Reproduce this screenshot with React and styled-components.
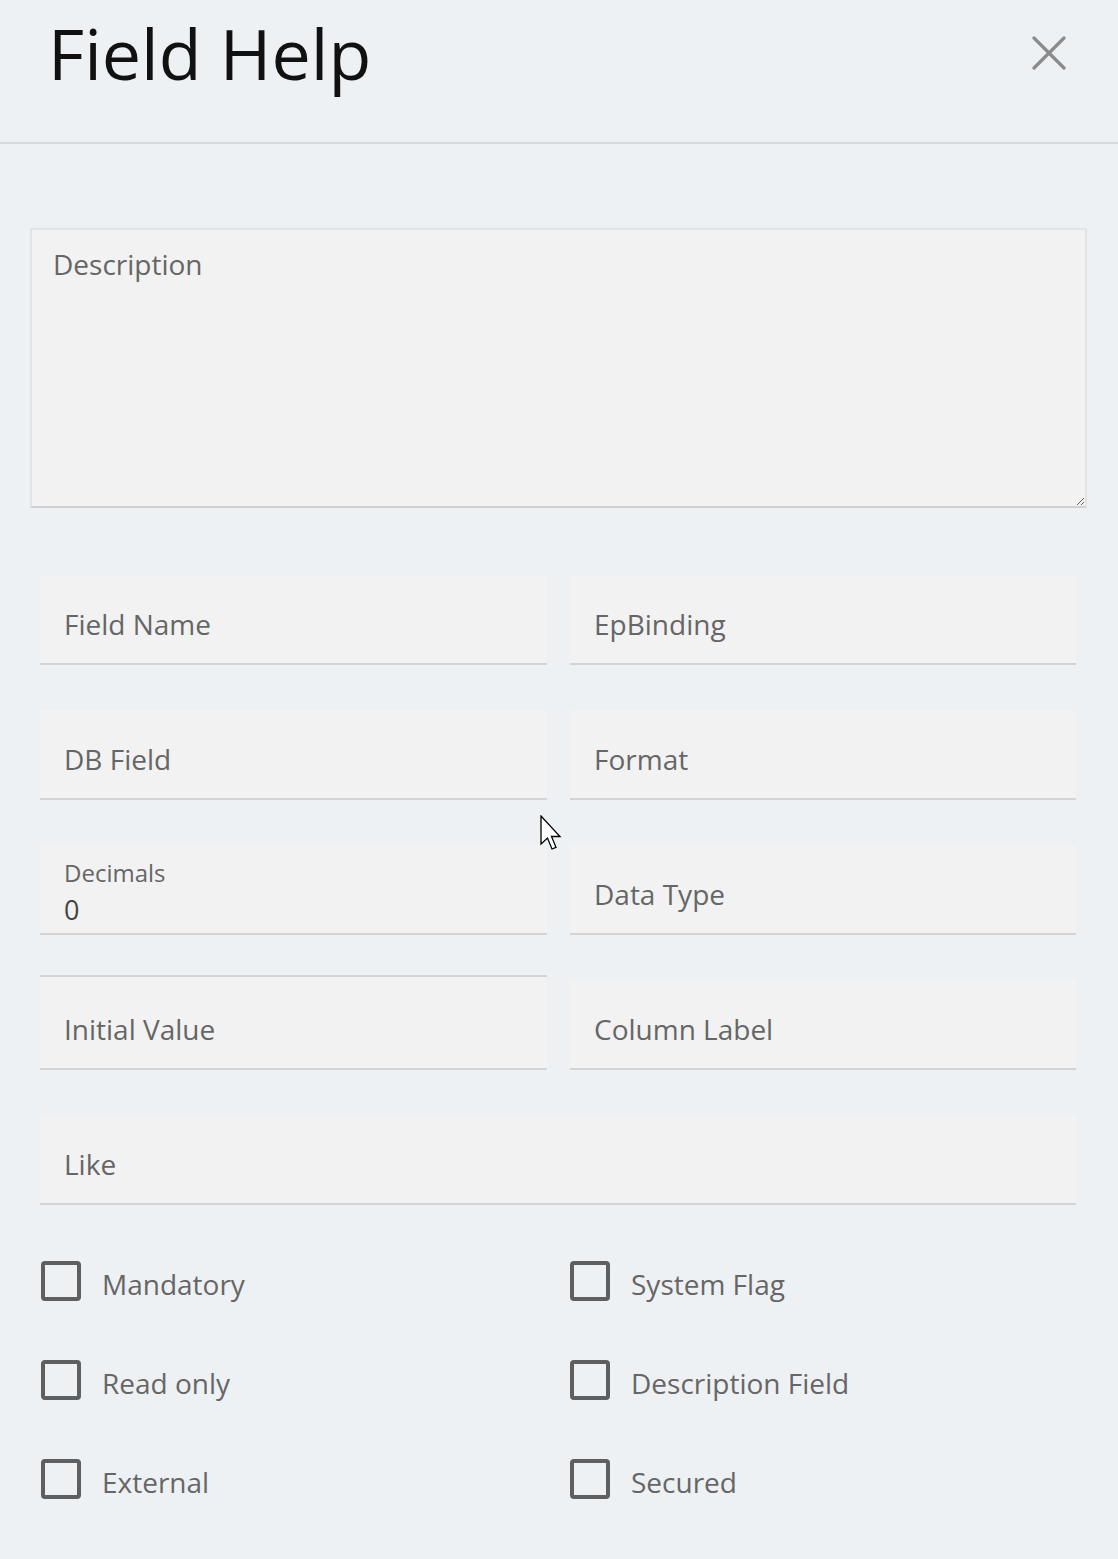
import React from "react";
import styled, { createGlobalStyle } from "styled-components";

const Global = createGlobalStyle`
  html, body { margin: 0; padding: 0; background: #eef1f4; }
  body { font-family: "Open Sans", "Noto Sans", sans-serif; }
  * { box-sizing: border-box; }
`;

const Page = styled.div`
  position: relative;
  width: 1118px;
  min-height: 1559px;
  background: #eef1f4;
`;

const Header = styled.header`
  height: 144px;
  border-bottom: 2px solid #d7dadd;
  display: flex;
  align-items: flex-start;
  justify-content: space-between;
  padding: 0 52px 0 48px;
`;

const Title = styled.h1`
  margin: 0;
  padding-top: 8px;
  font-family: "Open Sans", sans-serif;
  font-weight: 400;
  font-size: 70px;
  line-height: 90px;
  color: #111;
`;

const CloseButton = styled.button`
  margin-top: 36px;
  width: 34px;
  height: 34px;
  padding: 0;
  border: none;
  background: transparent;
  cursor: pointer;
  display: flex;
  align-items: center;
  justify-content: center;
`;

const Body = styled.div`
  padding: 84px 31px 0 30px;
`;

const DescriptionArea = styled.textarea`
  display: block;
  width: 1057px;
  height: 280px;
  margin: 0;
  padding: 18px 21px;
  background: #f2f2f2;
  border: 2px solid #e2e3e4;
  border-bottom-color: #d0d1d2;
  border-radius: 0;
  font-family: "Open Sans", sans-serif;
  font-size: 28px;
  line-height: 1.2;
  color: #444;
  resize: vertical;
  outline: none;
  &::placeholder { color: #666; }
`;

const Grid = styled.div`
  margin: 67px 11px 0 10px;
  display: grid;
  grid-template-columns: 507px 506px;
  column-gap: 23px;
  row-gap: 45px;
`;

const Field = styled.div`
  grid-column: ${(p) => (p.$wide ? "1 / -1" : "auto")};
  height: ${(p) => (p.$topLine ? "95px" : "90px")};
  margin-top: ${(p) => (p.$topLine ? "-5px" : "0")};
  background: #f2f2f2;
  border-bottom: 2px solid #d3d4d5;
  border-top: ${(p) => (p.$topLine ? "2px solid #d3d4d5" : "none")};
  padding: ${(p) => (p.$filled ? "14px 24px 0" : p.$topLine ? "38px 24px 0" : "35px 24px 0")};
  display: flex;
  flex-direction: column;
`;

const FieldLabel = styled.span`
  font-size: 28px;
  line-height: 28px;
  color: #666;
`;

const SmallLabel = styled.span`
  font-size: 24px;
  line-height: 27px;
  color: #666;
`;

const FieldValue = styled.span`
  margin-top: 9px;
  font-size: 27px;
  line-height: 30px;
  color: #444;
`;

const Checks = styled.div`
  margin: 56px 0 0 11px;
  display: grid;
  grid-template-columns: 529px 1fr;
  row-gap: 59px;
`;

const CheckRow = styled.label`
  display: flex;
  align-items: center;
  gap: 21px;
  height: 40px;
  cursor: pointer;
`;

const Box = styled.span`
  width: 40px;
  height: 40px;
  border: 4px solid #5f5f5f;
  border-radius: 4px;
  background: transparent;
  flex: none;
`;

const CheckText = styled.span`
  font-size: 28px;
  line-height: 28px;
  color: #666;
  padding-top: 5px;
`;

const Cursor = styled.svg`
  position: absolute;
  left: 540px;
  top: 815px;
  pointer-events: none;
`;

const fields = [
  { label: "Field Name" },
  { label: "EpBinding" },
  { label: "DB Field" },
  { label: "Format" },
  { label: "Decimals", value: "0" },
  { label: "Data Type" },
  { label: "Initial Value", topLine: true },
  { label: "Column Label" },
  { label: "Like", wide: true },
];

const checks = [
  "Mandatory",
  "System Flag",
  "Read only",
  "Description Field",
  "External",
  "Secured",
];

export default function App() {
  return (
    <Page>
      <Global />
      <Header>
        <Title>Field Help</Title>
        <CloseButton aria-label="Close">
          <svg width="34" height="34" viewBox="0 0 34 34">
            <path d="M2 2 L32 32 M32 2 L2 32" stroke="#8a8a8a" strokeWidth="3.2" strokeLinecap="round" fill="none" />
          </svg>
        </CloseButton>
      </Header>
      <Body>
        <DescriptionArea placeholder="Description" />
        <Grid>
          {fields.map((f) => (
            <Field key={f.label} $wide={f.wide} $topLine={f.topLine} $filled={!!f.value}>
              {f.value ? (
                <>
                  <SmallLabel>{f.label}</SmallLabel>
                  <FieldValue>{f.value}</FieldValue>
                </>
              ) : (
                <FieldLabel>{f.label}</FieldLabel>
              )}
            </Field>
          ))}
        </Grid>
        <Checks>
          {checks.map((c) => (
            <CheckRow key={c}>
              <Box />
              <CheckText>{c}</CheckText>
            </CheckRow>
          ))}
        </Checks>
      </Body>
      <Cursor width="26" height="40" viewBox="0 0 26 40">
        <path d="M1 1 L1 29 L7.5 23 L12 34 L16 32.3 L11.5 21.5 L20 21.5 Z" fill="#fff" stroke="#000" strokeWidth="1.3" strokeLinejoin="miter" />
      </Cursor>
    </Page>
  );
}
